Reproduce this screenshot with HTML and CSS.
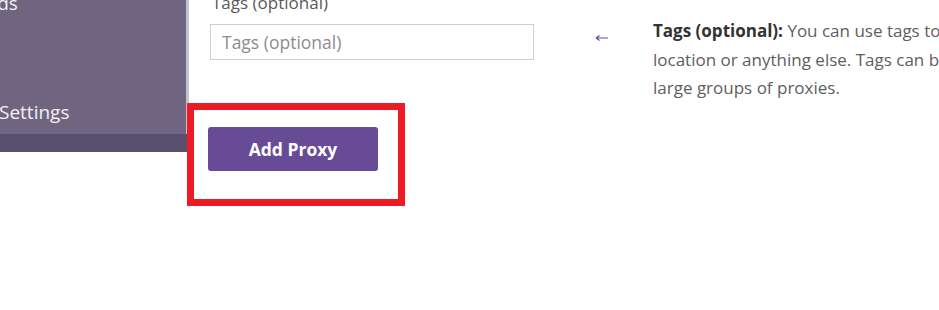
FILE: index.html
```html
<!DOCTYPE html>
<html>
<head>
<meta charset="utf-8">
<link rel="stylesheet" href="styles.css">
</head>
<body>
<div class="page">
  <aside class="sidebar">
    <nav class="nav">
      <div class="nav-item first">Proxy Leads</div>
      <div class="nav-item settings">Settings</div>
    </nav>
    <div class="nav-foot"></div>
  </aside>
  <main class="form">
    <label class="label">Tags (optional)</label>
    <input class="input" type="text" placeholder="Tags (optional)">
    <div class="actions">
      <div class="highlight">
        <button class="btn">Add Proxy</button>
        <div class="frame"></div>
      </div>
    </div>
  </main>
  <div class="pointer">
    <svg width="14" height="8" viewBox="0 0 14 8"><path d="M1 4H13M1 4L4.5 1.5M1 4L4.5 6.5" stroke="#6a4c9c" stroke-width="1.2" fill="none"/></svg>
  </div>
  <section class="help">
    <p><b>Tags (optional):</b> You can use tags to group proxies by<br>location or anything else. Tags can be used to manage<br>large groups of proxies.</p>
  </section>
</div>
</body>
</html>
```

FILE: styles.css
```css
html, body {
  margin: 0;
  padding: 0;
  background: #fff;
  overflow: hidden;
}
body {
  width: 939px;
  height: 310px;
  font-family: "Open Sans", "Liberation Sans", sans-serif;
}
.page {
  display: flex;
  margin-top: -7px;
}
.sidebar {
  width: 189px;
  flex: none;
  display: flex;
  flex-direction: column;
}
.nav {
  height: 141px;
  background: #6f6580;
  border-right: 3px solid #c4c2c8;
  overflow: hidden;
}
.nav-item {
  color: #f3f1f6;
  font-size: 19px;
  line-height: 24px;
  white-space: nowrap;
}
.nav-item.first {
  margin-top: -2px;
  text-indent: -89px;
}
.nav-item.settings {
  margin-top: 85px;
  text-indent: -1px;
}
.nav-foot {
  height: 18px;
  width: 187px;
  background: #584e6e;
}
.form {
  width: 371px;
  flex: none;
  padding-left: 21px;
  box-sizing: border-box;
  display: flex;
  flex-direction: column;
  align-items: flex-start;
}
.label {
  font-size: 17px;
  line-height: 20px;
  color: #5a5a5a;
  margin-left: 2px;
}
.input {
  margin-top: 11px;
  width: 324px;
  height: 36px;
  box-sizing: border-box;
  border: 1px solid #cfcfcf;
  padding: 0 11px;
  font-family: inherit;
  font-size: 17.5px;
  color: #555;
  outline: none;
}
.input::placeholder {
  color: #8d8d8d;
}
.actions {
  margin-top: 67px;
  margin-left: -2px;
}
.highlight {
  position: relative;
}
.btn {
  display: block;
  width: 170px;
  height: 44px;
  background: #674b97;
  color: #fff;
  border: none;
  border-radius: 3px;
  font-family: inherit;
  font-weight: 700;
  font-size: 17.5px;
  padding: 0;
}
.frame {
  position: absolute;
  left: -21px;
  top: -24px;
  width: 218px;
  height: 103px;
  box-sizing: border-box;
  border: 7px solid #ed1c24;
}
.pointer {
  width: 58px;
  flex: none;
  padding-left: 35px;
  padding-top: 41px;
  line-height: 0;
}
.help {
  flex: 1;
  overflow: hidden;
}
.help p {
  margin: 24px 0 0 0;
  font-size: 17px;
  line-height: 28.5px;
  color: #5e5e5e;
  white-space: nowrap;
}
.help b {
  color: #333;
}
```
